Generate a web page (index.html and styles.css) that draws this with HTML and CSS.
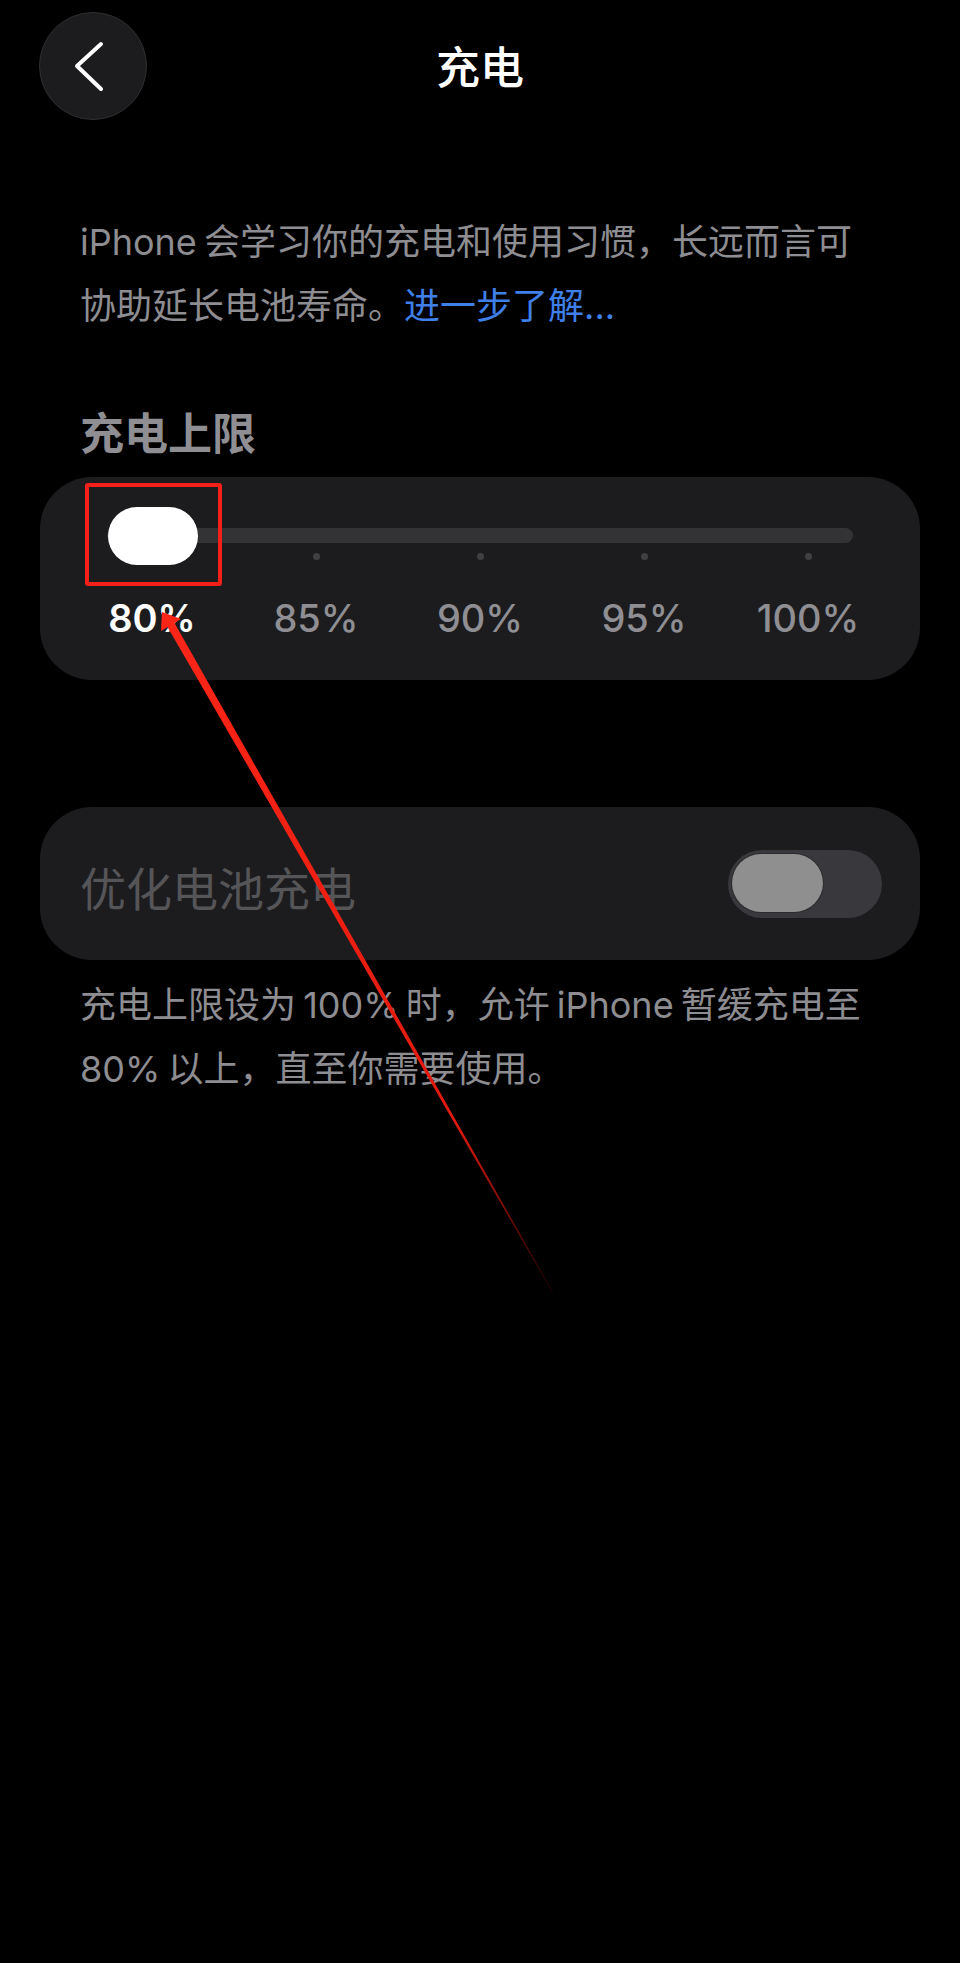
FILE: index.html
```html
<!DOCTYPE html>
<html lang="zh-CN">
<head>
    <meta charset="UTF-8">
    <meta name="viewport" content="width=device-width, initial-scale=1.0">
    <title>充电</title>
    <link rel="stylesheet" href="styles.css">
</head>
<body>
    <div class="nav">
        <button class="back" aria-label="返回">
            <svg width="108" height="108" viewBox="0 0 108 108">
                <path d="M62 32 L38 54 L62 77" fill="none" stroke="#fff" stroke-width="4" stroke-linecap="round" stroke-linejoin="round"/>
            </svg>
        </button>
        <h1 class="title">充电</h1>
        <span></span>
    </div>

    <p class="intro">iPhone 会学习你的充电和使用习惯，长远而言可协助延长电池寿命。<a href="#">进一步了解...</a></p>

    <h2 class="section-title">充电上限</h2>
    <div class="card limit-card">
        <div class="slider">
            <div class="track"></div>
            <div class="ticks">
                <span></span><span class="dot"></span><span class="dot"></span><span class="dot"></span><span class="dot"></span>
            </div>
            <div class="thumb"></div>
        </div>
        <div class="labels">
            <span class="active">80%</span>
            <span>85%</span>
            <span>90%</span>
            <span>95%</span>
            <span>100%</span>
        </div>
    </div>

    <div class="card toggle-card">
        <span class="toggle-label">优化电池充电</span>
        <div class="switch"><div class="knob"></div></div>
    </div>
    <p class="footnote">充电上限设为 100% 时，允许 iPhone 暂缓充电至 80% 以上，直至你需要使用。</p>

    <!-- red markup drawn over the slider -->
    <div class="mark-box"></div>
    <svg class="mark-arrow" width="960" height="1400" viewBox="0 0 960 1400">
        <defs>
            <linearGradient id="arrowFade" gradientUnits="userSpaceOnUse" x1="162" y1="612" x2="553" y2="1293">
                <stop offset="0" stop-color="#ff2618"/>
                <stop offset="0.75" stop-color="#e01a0e"/>
                <stop offset="1" stop-color="#1a0000"/>
            </linearGradient>
        </defs>
        <polygon points="162,612 181,619 174.5,623 553.6,1293 552.6,1293 167.5,627 161,631" fill="url(#arrowFade)"/>
    </svg>
</body>
</html>
```

FILE: styles.css
```css
/* General Styles */
html {
    background-color: #000;
}

body {
    margin: 0;
    min-height: 1963px;
    background-color: #000;
    color: #fff;
    font-family: Inter, "Noto Sans CJK SC", sans-serif;
    position: relative;
}

/* Top bar */
.nav {
    display: grid;
    grid-template-columns: 108px 1fr 108px;
    align-items: center;
    padding: 12px 39px 0;
    height: 108px;
}

.back {
    width: 108px;
    height: 108px;
    padding: 0;
    border-radius: 50%;
    border: 1px solid #2f2f31;
    background-color: #1c1c1e;
    cursor: pointer;
}

.back svg {
    display: block;
    margin: -1px;
}

.title {
    margin: 0;
    text-align: center;
    font-size: 44px;
    font-weight: 500;
    line-height: 52px;
    padding-top: 4px;
}

/* Texts */
.intro {
    margin: 90px 0 0;
    padding: 0 80px;
    font-size: 36px;
    line-height: 64px;
    color: #8d8d92;
    word-spacing: -3px;
}

.intro a {
    color: #3f7fe8;
    text-decoration: none;
}

.section-title {
    margin: 70px 0 0;
    padding: 0 80px;
    font-size: 44px;
    line-height: 52px;
    font-weight: 600;
    color: #8e8e93;
}

.card {
    margin: 0 40px;
    background-color: #1c1c1e;
    border-radius: 52px;
}

/* Charge limit slider */
.limit-card {
    margin-top: 17px;
    padding: 30px 30px 39px;
}

.slider {
    position: relative;
    height: 58px;
}

.track {
    position: absolute;
    left: 37px;
    right: 37px;
    top: 21px;
    height: 15px;
    border-radius: 8px;
    background-color: #333336;
}

.ticks {
    position: absolute;
    inset: 0;
    display: grid;
    grid-template-columns: repeat(5, 1fr);
}

.ticks span {
    justify-self: center;
}

.ticks .dot {
    width: 7px;
    height: 7px;
    margin-top: 46px;
    border-radius: 50%;
    background-color: #404043;
}

.thumb {
    position: absolute;
    left: 38px;
    top: 0;
    width: 90px;
    height: 58px;
    border-radius: 30px;
    background-color: #fff;
}

.labels {
    display: grid;
    grid-template-columns: repeat(5, 1fr);
    margin-top: 30px;
    text-align: center;
    font-size: 38px;
    line-height: 46px;
    font-weight: 500;
    color: #8e8e93;
}

.labels .active {
    color: #fff;
    font-weight: 600;
}

/* Optimised charging row */
.toggle-card {
    margin-top: 127px;
    height: 153px;
    padding: 0 38px 0 40px;
    display: flex;
    align-items: center;
    justify-content: space-between;
}

.toggle-label {
    font-size: 46px;
    color: #555558;
    padding-top: 5px;
}

.switch {
    width: 154px;
    height: 68px;
    border-radius: 34px;
    background-color: #39393d;
    padding: 4px;
    box-sizing: border-box;
}

.knob {
    width: 91px;
    height: 58px;
    border-radius: 29px;
    background-color: #8f8f8f;
    box-shadow: 0 0 0 1px #2c2c2e;
}

.footnote {
    margin: 13px 0 0;
    padding: 0 80px;
    font-size: 36px;
    line-height: 64px;
    color: #8d8d92;
    word-spacing: -3px;
}

/* Markup on top of the screen */
.mark-box {
    position: absolute;
    left: 85px;
    top: 483px;
    width: 129px;
    height: 95px;
    border: 4px solid #f5201a;
    border-radius: 3px;
}

.mark-arrow {
    position: absolute;
    left: 0;
    top: 0;
}
```
